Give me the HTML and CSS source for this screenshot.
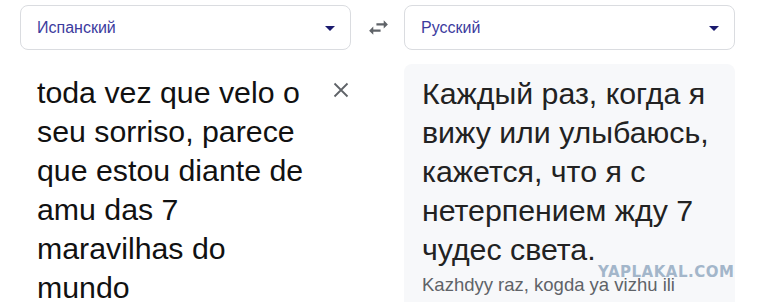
FILE: index.html
```html
<!DOCTYPE html>
<html lang="ru">
<head>
    <meta charset="UTF-8">
    <meta name="viewport" content="width=device-width, initial-scale=1.0">
    <title>Переводчик</title>
    <link rel="stylesheet" href="styles.css">
</head>
<body>
    <div class="translator">
        <div class="lang-select">
            <span class="lang-name">Испанский</span>
            <span class="caret"></span>
        </div>

        <div class="swap">
            <svg width="25" height="25" viewBox="0 0 24 24">
                <path fill="#5f6368" d="M6.99 11L3 15l3.99 4v-3H14v-2H6.99v-3zM21 9l-3.99-4v3H10v2h7.01v3L21 9z"/>
            </svg>
        </div>

        <div class="lang-select">
            <span class="lang-name">Русский</span>
            <span class="caret"></span>
        </div>

        <div class="source">
            <p class="source-text">toda vez que velo o seu sorriso, parece que estou diante de amu das 7 maravilhas do mundo</p>
            <svg class="clear" width="16" height="16" viewBox="0 0 16 16">
                <path d="M1.5 1.5L14.5 14.5M14.5 1.5L1.5 14.5" stroke="#5f6368" stroke-width="1.8" fill="none"/>
            </svg>
        </div>

        <div></div>

        <div class="result">
            <p class="result-text">Каждый раз, когда я вижу или улыбаюсь, кажется, что я с нетерпением жду 7 чудес света.</p>
            <p class="translit">Kazhdyy raz, kogda ya vizhu ili</p>
            <span class="watermark">YAPLAKAL.COM</span>
        </div>
    </div>
</body>
</html>
```

FILE: styles.css
```css
* {
    margin: 0;
    padding: 0;
    box-sizing: border-box;
}

body {
    font-family: 'Liberation Sans', Arial, sans-serif;
    background-color: #fff;
    overflow: hidden;
}

.translator {
    display: grid;
    grid-template-columns: 331px 53px 331px;
    grid-template-rows: 45px 1fr;
    row-gap: 14px;
    padding: 5px 0 0 20px;
    height: 302px;
}

.lang-select {
    display: flex;
    align-items: center;
    justify-content: space-between;
    padding: 0 15px 0 16px;
    border: 1px solid #dadce0;
    border-radius: 8px;
}

.lang-name {
    font-size: 16px;
    color: #3b3b9e;
}

.caret {
    width: 0;
    height: 0;
    border-left: 5px solid transparent;
    border-right: 5px solid transparent;
    border-top: 5px solid #1a1a6e;
    margin-top: 2px;
}

.swap {
    display: flex;
    align-items: center;
    justify-content: center;
    padding-left: 1px;
}

.source {
    display: flex;
    justify-content: space-between;
    align-items: flex-start;
    padding: 9px 2px 0 17px;
}

.source-text {
    width: 282px;
    font-size: 30.3px;
    line-height: 39px;
    color: #111;
}

.clear {
    margin-top: 9px;
}

.result {
    position: relative;
    background-color: #f7f8fa;
    border-radius: 8px 8px 0 0;
    padding: 10px 18px 0 18px;
}

.result-text {
    font-size: 30.3px;
    line-height: 39px;
    color: #222;
}

.translit {
    margin-top: 4px;
    font-size: 18.5px;
    line-height: 24px;
    color: #5f6368;
}

.watermark {
    position: absolute;
    left: 194px;
    top: 201px;
    font-family: 'DejaVu Sans', sans-serif;
    font-weight: bold;
    font-size: 15px;
    line-height: 14px;
    letter-spacing: 0.5px;
    color: #a3b6ca;
}
```
